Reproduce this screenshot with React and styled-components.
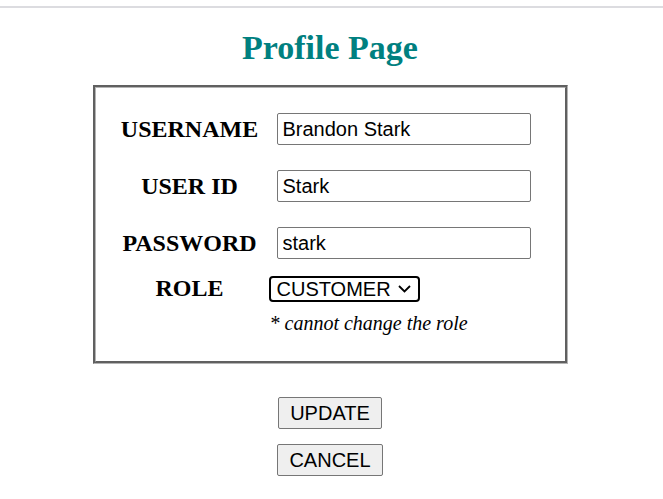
import React from "react";
import styled, { createGlobalStyle } from "styled-components";

const Global = createGlobalStyle`
  html, body { margin: 0; padding: 0; background: #fff; }
  body { font-family: "Liberation Serif", "Times New Roman", serif; color: #000; }
`;

const Page = styled.div`
  width: 660px;
  display: flex;
  flex-direction: column;
  align-items: center;
`;

const TopRule = styled.div`
  align-self: stretch;
  width: 663px;
  height: 2px;
  margin-top: 6px;
  background: #dcdce0;
`;

const Title = styled.h1`
  margin: 20px 0 18px;
  font-family: "Liberation Serif", "Times New Roman", serif;
  font-size: 34px;
  font-weight: bold;
  line-height: 39px;
  color: #008080;
`;

const Card = styled.div`
  box-sizing: border-box;
  width: 475px;
  border: 3px groove #b4b4b4;
  padding: 25px 0 26px 9px;
  display: flex;
  flex-direction: column;
`;

const Row = styled.div`
  display: flex;
  align-items: center;
  margin-top: ${(p) => p.$gap || 0}px;
`;

const Label = styled.div`
  width: 170px;
  margin-right: 2px;
  text-align: center;
  font-size: 24px;
  font-weight: bold;
  line-height: 27px;
  white-space: nowrap;
`;

const Input = styled.input`
  box-sizing: border-box;
  width: 254px;
  height: 32px;
  border: 1px solid #767676;
  border-radius: 2px;
  padding: 0 5px;
  font-family: "Liberation Sans", Arial, sans-serif;
  font-size: 20px;
  color: #000;
  background: #fff;
  outline: none;
`;

const SelectWrap = styled.div`
  position: relative;
  margin-left: -8px;
`;

const Select = styled.select`
  appearance: none;
  box-sizing: border-box;
  width: 151px;
  height: 26px;
  border: 2px solid #000;
  border-radius: 4px;
  padding: 0 0 0 6px;
  font-family: "Liberation Sans", Arial, sans-serif;
  font-size: 20px;
  line-height: 22px;
  color: #000;
  background: #fff;
  outline: none;
`;

const Chevron = styled.svg`
  position: absolute;
  right: 9px;
  top: 9px;
  pointer-events: none;
`;

const Note = styled.div`
  margin-left: 165px;
  margin-top: 10px;
  font-size: 20px;
  font-style: italic;
  line-height: 23px;
`;

const Actions = styled.div`
  margin-top: 33px;
  display: flex;
  flex-direction: column;
  align-items: center;
  gap: 15px;
`;

const Button = styled.button`
  box-sizing: border-box;
  height: 32px;
  padding: 0 11px;
  border: 1px solid #767676;
  border-radius: 2px;
  background: #efefef;
  font-family: "Liberation Sans", Arial, sans-serif;
  font-size: 20px;
  color: #000;
`;

export default function App() {
  return (
    <>
      <Global />
      <Page>
        <TopRule />
        <Title>Profile Page</Title>
        <Card>
          <Row>
            <Label>USERNAME</Label>
            <Input defaultValue="Brandon Stark" />
          </Row>
          <Row $gap={25}>
            <Label>USER ID</Label>
            <Input defaultValue="Stark" />
          </Row>
          <Row $gap={25}>
            <Label>PASSWORD</Label>
            <Input defaultValue="stark" />
          </Row>
          <Row $gap={16}>
            <Label>ROLE</Label>
            <SelectWrap>
              <Select defaultValue="CUSTOMER">
                <option>CUSTOMER</option>
              </Select>
              <Chevron width="13" height="8" viewBox="0 0 13 8">
                <path d="M1 1 L6.5 6.5 L12 1" fill="none" stroke="#000" strokeWidth="1.8" />
              </Chevron>
            </SelectWrap>
          </Row>
          <Note>* cannot change the role</Note>
        </Card>
        <Actions>
          <Button>UPDATE</Button>
          <Button>CANCEL</Button>
        </Actions>
      </Page>
    </>
  );
}
